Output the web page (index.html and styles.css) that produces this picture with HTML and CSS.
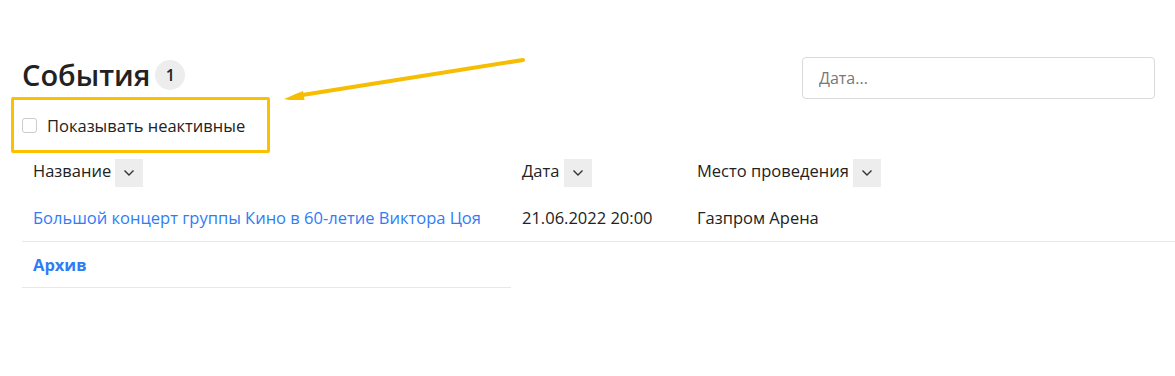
FILE: index.html
```html
<!DOCTYPE html>
<html lang="ru">
<head>
  <meta charset="UTF-8">
  <title>События</title>
  <link rel="stylesheet" href="styles.css">
</head>
<body>
  <div class="page">
    <div class="top">
      <h1>События <span class="count">1</span></h1>
      <input class="date-input" type="text" placeholder="Дата...">
    </div>

    <div class="filter">
      <label class="check"><span class="box"></span>Показывать неактивные</label>
    </div>

    <svg class="arrow" width="260" height="60" viewBox="0 0 260 60">
      <line x1="253" y1="20" x2="26" y2="56" stroke="#f7bd00" stroke-width="4" stroke-linecap="round"/>
      <polygon points="14,59 33,51 35,63" fill="#f7bd00"/>
    </svg>

    <table class="events">
      <thead>
        <tr>
          <th class="c-name">Название <span class="sort"><svg width="12" height="8" viewBox="0 0 12 8"><path d="M1.5 1.5 L6 6 L10.5 1.5" fill="none" stroke="#333" stroke-width="1.4"/></svg></span></th>
          <th class="c-date">Дата <span class="sort"><svg width="12" height="8" viewBox="0 0 12 8"><path d="M1.5 1.5 L6 6 L10.5 1.5" fill="none" stroke="#333" stroke-width="1.4"/></svg></span></th>
          <th>Место проведения <span class="sort"><svg width="12" height="8" viewBox="0 0 12 8"><path d="M1.5 1.5 L6 6 L10.5 1.5" fill="none" stroke="#333" stroke-width="1.4"/></svg></span></th>
        </tr>
      </thead>
      <tbody>
        <tr class="row">
          <td><a href="#">Большой концерт группы Кино в 60-летие Виктора Цоя</a></td>
          <td>21.06.2022 20:00</td>
          <td>Газпром Арена</td>
        </tr>
        <tr class="archive">
          <td><a href="#">Архив</a></td>
          <td class="empty"></td>
          <td class="empty"></td>
        </tr>
      </tbody>
    </table>
  </div>
</body>
</html>
```

FILE: styles.css
```css
body { margin: 0; font-family: "Open Sans", "Noto Sans", sans-serif; color: #222; background: #fff; overflow: hidden; }
.page { position: relative; padding: 56px 20px 0 22px; }

.top { display: flex; justify-content: space-between; align-items: flex-start; }
h1 { margin: 0; font-size: 29px; font-weight: 600; line-height: 38px; display: flex; align-items: center; gap: 5px; }
.count {
  display: inline-flex; align-items: center; justify-content: center;
  width: 30px; height: 30px; border-radius: 50%;
  background: #ededed; font-size: 16px; font-weight: 600;
}
.date-input {
  width: 353px; height: 42px; box-sizing: border-box; margin-top: 1px;
  border: 1px solid #d9d9d9; border-radius: 4px;
  padding: 0 16px; font-family: inherit; font-size: 16px; color: #222;
}
.date-input::placeholder { color: #777; }

.filter {
  margin: -2px 0 0 -11px; width: 259px; height: 56px; box-sizing: border-box;
  border: 3px solid #fbc100; border-radius: 2px;
  display: flex; align-items: center; padding-left: 8px;
}
.check { display: flex; align-items: center; gap: 10px; font-size: 16.5px; }
.box { width: 13px; height: 13px; border: 1px solid #ccc; border-radius: 3px; }

.arrow { position: absolute; left: 270px; top: 40px; }

.events { border-collapse: collapse; width: calc(100% + 20px); font-size: 16.5px; }
.events th { text-align: left; font-weight: 400; padding: 6px 0 6px 11px; height: 28px; }
.events th .sort {
  display: inline-flex; align-items: center; justify-content: center;
  width: 28px; height: 28px; background: #ededed; vertical-align: middle; margin-left: 0;
}
.c-name { width: 478px; }
.c-date { width: 164px; }
.events td { padding: 0 0 0 11px; }
.row td { height: 48px; border-bottom: 1px solid #e8e8e8; }
.archive td { height: 45px; border-bottom: 1px solid #e8e8e8; }
.archive td.empty { border-bottom: none; }
.events a { color: #2f7cf6; text-decoration: none; }
.archive a { font-weight: 700; }
```
